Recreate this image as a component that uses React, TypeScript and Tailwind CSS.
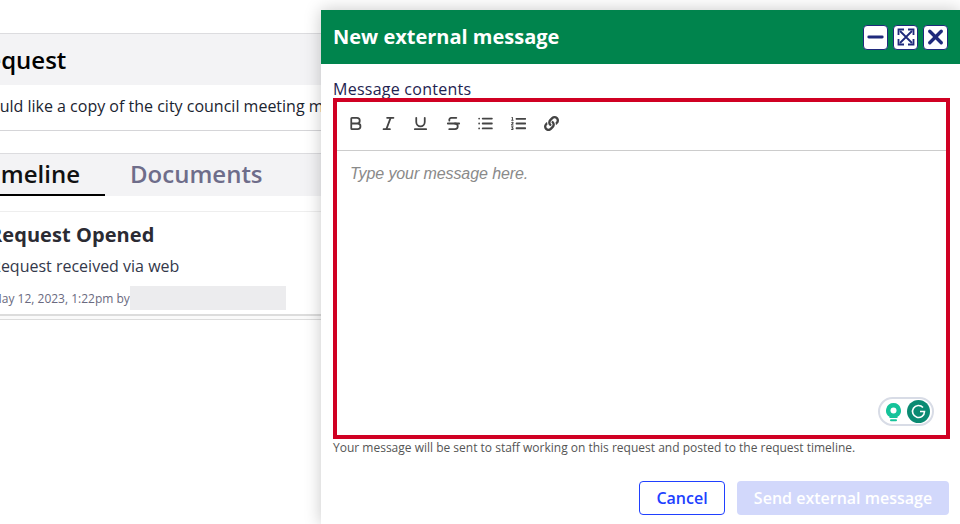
import { Bold, Italic, Underline, Strikethrough, List, Minus, X } from "lucide-react";
import { FaLink, FaListOl } from "react-icons/fa";

function ExpandIcon() {
  return (
    <svg width="18" height="18" viewBox="0 0 18 18" fill="none" stroke="#1f2a7c" strokeWidth="1.8">
      <path d="M3 3l12 12M15 3L3 15" />
      <path d="M1.5 7V1.5H7M11 1.5h5.5V7M16.5 11v5.5H11M7 16.5H1.5V11" />
    </svg>
  );
}

function HeaderButton({ children }: { children: React.ReactNode }) {
  return (
    <button className="flex h-[25px] w-[25px] items-center justify-center rounded-[4px] border border-[#1f2a7c] bg-white">
      {children}
    </button>
  );
}

export default function App() {
  const iconClass = "h-[17px] w-[17px] text-[#444444]";
  return (
    <div className="relative h-[524px] w-[960px] overflow-hidden bg-white font-['Open_Sans',sans-serif]">
      <div className="flex w-[321px] flex-col pt-[33px]">
        <div className="h-[52px] border-t border-[#dcdcdf] bg-[#f3f3f5] pt-[7px]">
          <div className="ml-[-28px] text-[24px] font-semibold leading-[38px] text-black whitespace-nowrap">Request</div>
        </div>
        <div className="h-[46px] border-b border-[#d5d5d8] pt-[8px]">
          <div className="ml-[-31px] text-[16px] leading-[26px] text-[#1b2430] whitespace-nowrap">
            I would like a copy of the city council meeting minutes
          </div>
        </div>
        <div className="mt-[22px] flex h-[43px] items-center border-t border-[#dcdcdf] bg-[#f3f3f5]">
          <div className="relative ml-[-25px] flex h-full w-[130px] items-center justify-end border-b-2 border-black pr-[25px] text-[24px] font-semibold text-[#111111] whitespace-nowrap">
            Timeline
          </div>
          <div className="ml-[25px] pb-[2px] text-[24px] font-semibold text-[#6e6d8a]">Documents</div>
        </div>
        <div className="mt-[15px] border-t border-[#eeeeee] pt-[9px]">
          <div className="ml-[-11px] text-[20px] font-bold leading-[28px] tracking-[0.07px] text-[#2b2b33] whitespace-nowrap">Request Opened</div>
          <div className="ml-[-9px] mt-[4px] text-[16px] leading-[26px] text-[#33384a] whitespace-nowrap">Request received via web</div>
          <div className="mt-[7px] flex h-[24px] items-center">
            <span className="ml-[-9px] pt-[2px] text-[12px] text-[#6a6a80] whitespace-nowrap">May 12, 2023, 1:22pm by</span>
            <span className="h-[24px] w-[156px] bg-[#ececee]"></span>
          </div>
        </div>
        <div className="mt-[4px] h-[6px] border-y border-[#dcdcdc] border-t-2 bg-[#fafafa]"></div>
      </div>

      <div className="absolute bottom-0 left-[321px] right-0 top-[10px] flex flex-col bg-white shadow-[0_0_16px_rgba(0,0,0,0.22)]">
        <div className="flex h-[54px] items-center justify-between bg-[#00844d] px-[12px]">
          <h1 className="text-[20px] font-bold text-white">New external message</h1>
          <div className="flex gap-[5px]">
            <HeaderButton><Minus className="h-[24px] w-[24px] text-[#1f2a7c]" strokeWidth={3} /></HeaderButton>
            <HeaderButton><ExpandIcon /></HeaderButton>
            <HeaderButton><X className="h-[24px] w-[24px] text-[#1f2a7c]" strokeWidth={3.5} /></HeaderButton>
          </div>
        </div>
        <div className="flex flex-1 flex-col pl-[12px] pr-[10px]">
          <label className="mt-[14px] h-[20px] text-[16px] leading-[22px] tracking-[0.25px] text-[#1e2350]">Message contents</label>
          <div className="relative flex h-[341px] flex-col border-4 border-[#d00023]">
            <div className="flex h-[49px] items-center gap-[15.6px] border-b border-[#cccccc] pb-[6px] pl-[10px]">
              <Bold className={iconClass} strokeWidth={2.5} />
              <Italic className={iconClass} strokeWidth={2.5} />
              <Underline className={iconClass} strokeWidth={2.5} />
              <Strikethrough className={iconClass} strokeWidth={2.5} />
              <List className={iconClass} strokeWidth={2.5} />
              <FaListOl className="h-[15px] w-[17px] text-[#444444]" />
              <FaLink className="ml-[1px] h-[15px] w-[15px] text-[#444444]" />
            </div>
            <div className="pl-[13px] pt-[12px] font-['Liberation_Sans',sans-serif] text-[16px] italic leading-[22px] tracking-[-0.09px] text-[#8a8a8a]">
              Type your message here.
            </div>
            <div className="absolute bottom-[9px] right-[12px] flex h-[29px] w-[56px] items-center justify-between rounded-full border-2 border-[#d8dce6] bg-white pl-[5px] pr-[2px]">
              <svg width="17" height="20" viewBox="0 0 17 20">
                <path d="M8.5 1a7.5 7.5 0 0 0-4 13.8V16h8v-1.2A7.5 7.5 0 0 0 8.5 1z" fill="#15c39a" />
                <circle cx="8.5" cy="8.5" r="3" fill="#fff" />
                <rect x="5" y="17.3" width="7" height="2" rx="1" fill="#15c39a" />
              </svg>
              <svg width="23" height="23" viewBox="0 0 23 23">
                <circle cx="11.5" cy="11.5" r="11.5" fill="#0b8a72" />
                <path d="M16 7.5A6 6 0 1 0 17.5 11.5h-4.5" fill="none" stroke="#fff" strokeWidth="1.6" />
              </svg>
            </div>
          </div>
          <p className="mt-[1px] text-[12px] leading-[16px] text-[#555555]">
            Your message will be sent to staff working on this request and posted to the request timeline.
          </p>
          <div className="mr-[1px] mt-[25px] flex justify-end gap-[12px]">
            <button className="h-[34px] w-[86px] rounded-[4px] border border-[#2040ff] bg-white text-[16px] font-semibold text-[#2040ff]">Cancel</button>
            <button className="h-[34px] w-[212px] rounded-[4px] bg-[#d2d8fb] text-[16px] font-semibold text-white">Send external message</button>
          </div>
        </div>
      </div>
    </div>
  );
}
